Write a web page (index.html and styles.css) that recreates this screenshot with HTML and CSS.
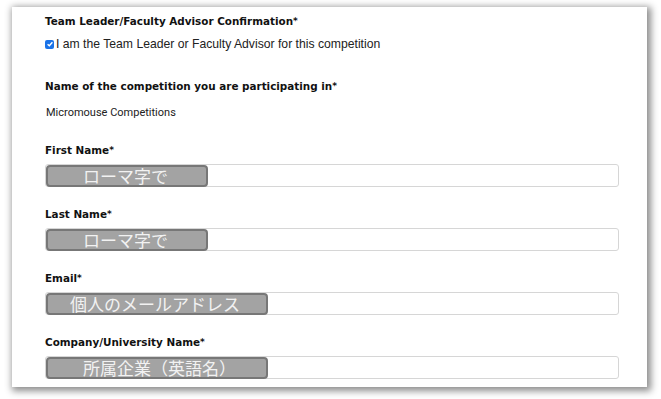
FILE: index.html
```html
<!DOCTYPE html>
<html lang="en">
<head>
<meta charset="utf-8">
<link rel="stylesheet" href="styles.css">
</head>
<body>
<div class="card">
  <div class="label first">Team Leader/Faculty Advisor Confirmation<span class="req">*</span></div>
  <label class="check"><span class="box"><svg width="8" height="8" viewBox="0 0 8 8"><path d="M1.6 4.2 L3.3 5.8 L6.4 2.2" fill="none" stroke="#fff" stroke-width="1.4"/></svg></span>I am the Team Leader or Faculty Advisor for this competition</label>
  <div class="label comp">Name of the competition you are participating in<span class="req">*</span></div>
  <div class="value">Micromouse Competitions</div>

  <div class="label field">First Name<span class="req">*</span></div>
  <div class="input"><span class="hint short">ローマ字で</span></div>

  <div class="label field">Last Name<span class="req">*</span></div>
  <div class="input"><span class="hint short">ローマ字で</span></div>

  <div class="label field">Email<span class="req">*</span></div>
  <div class="input"><span class="hint long">個人のメールアドレス</span></div>

  <div class="label field">Company/University Name<span class="req">*</span></div>
  <div class="input"><span class="hint long company">所属企業（英語名）</span></div>
</div>
</body>
</html>
```
FILE: styles.css
```css
html, body { margin: 0; padding: 0; background: #fff; }
body { padding: 7px 14px 12px 12px; }
.card {
  width: 635px;
  height: 380px;
  box-sizing: border-box;
  background: #fff;
  box-shadow: 2px 2px 7px 2px rgba(0,0,0,0.45);
  padding: 0 28px 0 33px;
  overflow: hidden;
}
.label {
  font-family: "DejaVu Sans", Verdana, sans-serif;
  font-weight: bold;
  font-size: 10.4px;
  line-height: 14px;
  color: #111;
}
.req { font-size: 9px; vertical-align: 1px; }
.label.first { margin-top: 7px; }
.check {
  display: flex;
  align-items: center;
  margin-top: 8px;
  font-family: "Liberation Sans", Arial, sans-serif;
  font-size: 12.2px;
  line-height: 16px;
  color: #222;
}
.box {
  width: 9px; height: 9px;
  background: #1a73e8;
  border-radius: 2px;
  margin-right: 2px;
  display: flex; align-items: center; justify-content: center;
}
.label.comp { margin-top: 27px; }
.value {
  margin-top: 13px;
  margin-left: 1px;
  font-family: Roboto, "Liberation Sans", sans-serif;
  font-size: 11px;
  line-height: 14px;
  color: #222;
}
.value + .label.field { margin-top: 23px; }
.label.field + .input { margin-top: 7px; }
.input {
  position: relative;
  height: 23px;
  box-sizing: border-box;
  border: 1px solid #d6d6d6;
  border-radius: 3px;
  background: #fff;
}
.input + .label.field { margin-top: 20px; }
.hint {
  position: absolute;
  left: 0; top: 0;
  height: 22px;
  box-sizing: border-box;
  background: #a3a3a3;
  border: 2px solid #777;
  border-radius: 4px;
  color: #f2f2f2;
  font-family: "Noto Sans CJK JP", sans-serif;
  font-size: 17px;
  line-height: 18px;
  white-space: nowrap;
}
.hint.short { width: 162px; padding-left: 35px; }
.hint.long { width: 222px; padding-left: 22px; }
.hint.long.company { padding-left: 35px; }
```
